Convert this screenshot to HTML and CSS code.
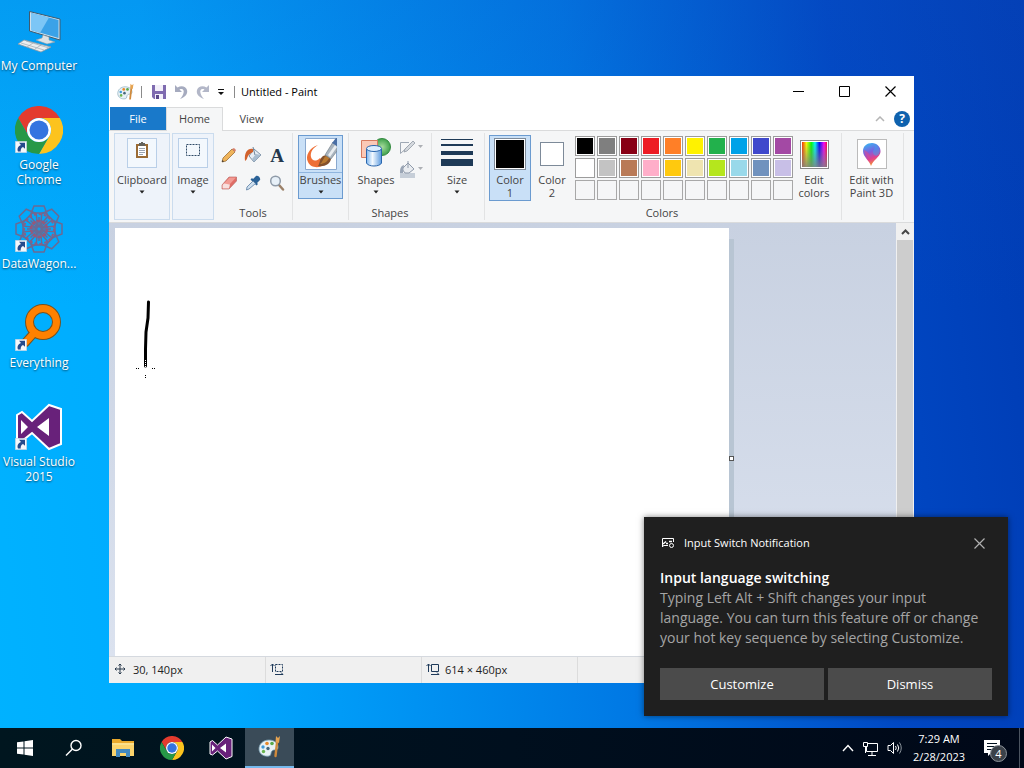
FILE: index.html
```html
<!DOCTYPE html>
<html lang="en">
<head>
  <meta charset="UTF-8">
  <title>Untitled - Paint</title>
  <link rel="stylesheet" href="styles.css">
</head>
<body>
  <!-- Shared icons -->
  <svg class="defs" width="0" height="0" aria-hidden="true">
    <symbol id="chrome" viewBox="0 0 48 48">
      <path fill="#e33b2e" d="M24 12H44.8A24 24 0 0 0 3.2 12L13.6 30A12 12 0 0 1 24 12Z"/>
      <path fill="#fcc31e" d="M44.8 12A24 24 0 0 1 24 48L34.4 30A12 12 0 0 0 24 12Z"/>
      <path fill="#279847" d="M24 48A24 24 0 0 1 3.2 12L13.6 30A12 12 0 0 0 34.4 30Z"/>
      <circle cx="24" cy="24" r="12" fill="#fff"/>
      <circle cx="24" cy="24" r="9.5" fill="#3474e0"/>
    </symbol>
    <symbol id="vs" viewBox="0 0 48 48">
      <path fill="#68217a" stroke="#fff" stroke-width="2" fill-rule="evenodd" d="M2 12L7 9L17 18L34 2L46 6V41L34 46L17 30L7 38L2 36Z"/>
      <path fill="#fff" d="M6 17L13 24L6 31ZM34 15V33L22 24Z"/>
    </symbol>
    <symbol id="shortcut" viewBox="0 0 12 12">
      <path fill="#f4f7fb" stroke="#b9cbdc" stroke-width=".6" d="M.3.3H11.7V11.7H.3Z"/>
      <path fill="#254a8c" d="M4 1.8H10V7.8L8 6C6 7 5.4 8.600 5.800 10.500H3C1.800 7.500 3.200 5 6 3.900Z"/>
    </symbol>
    <symbol id="palette" viewBox="0 0 24 24">
      <path fill="#e9f1f5" stroke="#7ba2b5" stroke-width=".8" d="M11 5C5 5 1 9 1 14C1 19 6 22 11 21C14 20.500 12 17 14.500 15.500C17 14 20 16 20 12C20 8 16 5 11 5Z"/>
      <circle cx="5" cy="12" r="1.700" fill="#3f9ad8"/>
      <circle cx="9" cy="8.500" r="1.800" fill="#e98a2a"/>
      <circle cx="14" cy="8.500" r="1.800" fill="#59a84b"/>
      <circle cx="5.500" cy="16.500" r="1.700" fill="#68b34e"/>
      <circle cx="10" cy="13.500" r="1.700" fill="#44677c"/>
      <path stroke="#d08a3c" stroke-width="2.400" stroke-linecap="round" d="M17.500 21L19 8"/>
      <path fill="#e6a451" d="M17.500 7L18 1L20 3L22 1L21 8Z"/>
    </symbol>
    <symbol id="down" viewBox="0 0 6 4">
      <path fill="currentColor" d="M.5.5H5.500L3 3.500Z"/>
    </symbol>
  </svg>

  <main class="desktop">
    <nav class="shortcuts">
      <a class="shortcut" href="#">
        <svg class="shortcut-icon" viewBox="0 0 48 48">
          <path fill="#cfe0ec" stroke="#3e5b70" d="M14.500 4.500L45 12V33L14.500 24Z"/>
          <path fill="#3aa2e8" d="M16 6L43.500 13V31L16 23Z"/>
          <path fill="#7cc6f6" d="M16 6L34 10.500L25 26L16 23Z"/>
          <path fill="#dfe3e6" stroke="#8f9aa2" stroke-width=".6" d="M28 28L34 30V33L40 35L32 37L21 33L27 31Z"/>
          <path fill="#eceef0" stroke="#8b98a3" stroke-width=".8" d="M9 33L36 40L26 45L3 37Z"/>
          <path stroke="#a0a9b0" stroke-width=".7" fill="none" d="M6 36L29 43M11 34L34 41M12 40L18 36M20 42L26 38"/>
        </svg>
        <span>My&nbsp;Computer</span>
      </a>
      <a class="shortcut" href="#">
        <svg class="shortcut-icon" viewBox="0 0 48 48">
          <use href="#chrome" width="48" height="48"/>
          <use href="#shortcut" y="35" width="12" height="12"/>
        </svg>
        <span>Google Chrome</span>
      </a>
      <a class="shortcut" href="#">
        <svg class="shortcut-icon" viewBox="0 0 48 48">
          <g fill="none" stroke="#6b6a94" stroke-width="1.500">
            <path id="petal" d="M24 22L15 11L19 1H29L33 11ZM17 8L31 8M24 22L24 12"/>
            <use href="#petal" transform="rotate(45 24 24)"/>
            <use href="#petal" transform="rotate(90 24 24)"/>
            <use href="#petal" transform="rotate(135 24 24)"/>
            <use href="#petal" transform="rotate(180 24 24)"/>
            <use href="#petal" transform="rotate(225 24 24)"/>
            <use href="#petal" transform="rotate(270 24 24)"/>
            <use href="#petal" transform="rotate(315 24 24)"/>
            <circle cx="24" cy="24" r="8" stroke="#96587a" stroke-width="2.500" stroke-dasharray="4 1"/>
            <circle cx="24" cy="24" r="15" stroke="#8a5f86" stroke-width="2" stroke-dasharray="3 2"/>
          </g>
          <use href="#shortcut" y="35" width="12" height="12"/>
        </svg>
        <span>DataWagon...</span>
      </a>
      <a class="shortcut" href="#">
        <svg class="shortcut-icon" viewBox="0 0 48 48">
          <path stroke="#77521f" stroke-width="9" stroke-linecap="round" d="M18 30L10 39"/>
          <circle cx="28" cy="18" r="13.500" fill="none" stroke="#77521f" stroke-width="9"/>
          <path stroke="#ff8100" stroke-width="7" stroke-linecap="round" d="M19 29L10 39"/>
          <circle cx="28" cy="18" r="13.500" fill="none" stroke="#ff8100" stroke-width="7"/>
          <use href="#shortcut" y="35" width="12" height="12"/>
        </svg>
        <span>Everything</span>
      </a>
      <a class="shortcut" href="#">
        <svg class="shortcut-icon" viewBox="0 0 48 48">
          <use href="#vs" width="48" height="48"/>
          <use href="#shortcut" y="35" width="12" height="12"/>
        </svg>
        <span>Visual Studio 2015</span>
      </a>
    </nav>

    <section class="window">
      <header class="titlebar">
        <svg width="18" height="18"><use href="#palette"/></svg>
        <i class="divider"></i>
        <button class="quick" aria-label="Save">
          <svg width="16" height="16" viewBox="0 0 16 16">
            <path fill="#7f6bb0" d="M1 1H15V15H3L1 13Z"/>
            <path fill="#f3f0fa" d="M4 1H12V7H4ZM4 10H12V15H4Z"/>
            <path fill="#5c4a8c" d="M5 11H8V15H5Z"/>
          </svg>
        </button>
        <button class="quick" aria-label="Undo">
          <svg width="16" height="16" viewBox="0 0 16 16">
            <path fill="#a6abbf" d="M2 1V8H9L6.500 5.500C9.500 4 11.500 6 10.500 9C10 11 9 13 7 15C12.500 13 15 10 14 6C13 2 8 1 4.500 3.500Z"/>
          </svg>
        </button>
        <button class="quick" aria-label="Redo">
          <svg width="16" height="16" viewBox="0 0 16 16">
            <path fill="#b3b7c8" d="M14 1V8H7L9.500 5.500C6.500 4 4.500 6 5.500 9C6 11 7 13 9 15C3.500 13 1 10 2 6C3 2 8 1 11.500 3.500Z"/>
          </svg>
        </button>
        <button class="quick customize" aria-label="Customize toolbar">
          <svg width="8" height="8" viewBox="0 0 8 8"><path fill="#111" d="M1 1H7V2H1ZM1 4H7L4 7Z"/></svg>
        </button>
        <i class="divider"></i>
        <h1>Untitled - Paint</h1>
        <div class="window-buttons">
          <button aria-label="Minimize"><svg width="11" height="11" viewBox="0 0 11 11"><path stroke="#000" d="M0 5.500H11"/></svg></button>
          <button aria-label="Maximize"><svg width="11" height="11" viewBox="0 0 11 11"><path fill="none" stroke="#000" d="M.5.5H10.500V10.500H.5Z"/></svg></button>
          <button aria-label="Close"><svg width="11" height="11" viewBox="0 0 11 11"><path stroke="#000" stroke-width="1.200" d="M.5.5L10.500 10.500M10.500.5L.5 10.500"/></svg></button>
        </div>
      </header>

      <div class="tabs">
        <button class="tab file">File</button>
        <button class="tab active">Home</button>
        <button class="tab">View</button>
        <div class="tab-tools">
          <button aria-label="Collapse ribbon"><svg width="10" height="6" viewBox="0 0 10 6"><path fill="none" stroke="#b5b5b5" stroke-width="1.500" d="M1 5L5 1L9 5"/></svg></button>
          <button class="help" aria-label="Help">?</button>
        </div>
      </div>

      <div class="ribbon">
        <div class="group collapsed clipboard">
          <button class="big">
            <span class="frame"><svg width="16" height="22" viewBox="0 0 16 22">
              <path fill="#9a6b34" d="M2 2H14V16H2Z"/>
              <path fill="#fff" d="M4 4H12V14H4Z"/>
              <path fill="#62625c" d="M5 1H7V0H9V1H11V4H5Z"/>
              <path stroke="#9aa4b0" d="M5 6.500H11M5 8.500H11M5 10.500H11M5 12.500H9"/>
            </svg></span>
            <span>Clipboard</span>
            <svg class="arrow"><use href="#down"/></svg>
          </button>
        </div>
        <div class="group collapsed image">
          <button class="big">
            <span class="frame"><svg width="16" height="22" viewBox="0 0 16 22"><path fill="none" stroke="#2e4a66" stroke-dasharray="2 1" d="M1.500 2.500H14.500V13.500H1.500Z"/></svg></span>
            <span>Image</span>
            <svg class="arrow"><use href="#down"/></svg>
          </button>
        </div>
        <div class="group tools">
          <div class="tool-grid">
            <button aria-label="Pencil"><svg width="16" height="16" viewBox="0 0 16 16">
              <path fill="#efb45b" stroke="#8f6127" stroke-width=".7" d="M2 11L11 2L14 5L5 14L1 15Z"/>
              <path fill="#d77f6b" d="M11 2L13 1L15 3L14 5Z"/><path fill="#333" d="M1.500 13L3 14.500L1 15Z"/>
            </svg></button>
            <button aria-label="Fill"><svg width="18" height="16" viewBox="0 0 18 16">
              <path fill="#e6edf4" stroke="#6f8499" stroke-width=".9" d="M10 2L17 8L10 15L5 9Z"/>
              <path fill="#a8bccf" d="M12 7L17 8L10 15L8 12Z"/>
              <path fill="#d2622d" d="M9 2C4 1 0 5 1 14C3 13 3 11 4 9C5 7 7 6 9 5Z"/>
              <path fill="none" stroke="#6f8499" d="M9 0L11 8"/>
            </svg></button>
            <button class="text-tool" aria-label="Text">A</button>
            <button aria-label="Eraser"><svg width="16" height="16" viewBox="0 0 16 16">
              <path fill="#e06d66" stroke="#b25c58" stroke-width=".6" d="M1 10L8 2H15.500V6L8 14H1Z"/>
              <path fill="#f29b94" d="M2 9.500L8.500 2.500H15L8.500 9.500Z"/>
              <path fill="#f7e0de" d="M1.500 10L3 8.500L9 9.500L8 13.500H1.500Z"/>
            </svg></button>
            <button aria-label="Color picker"><svg width="16" height="16" viewBox="0 0 16 16">
              <path fill="#2b6297" d="M8 4L11 1C13 0 16 3 15 5L12 8L13 9L11.500 10.500L5.500 4.500L7 3Z"/>
              <path fill="#cfe0ef" stroke="#5a7ea3" stroke-width=".8" d="M8 6L10.500 8.500L4 14L1.500 15L2 12Z"/>
            </svg></button>
            <button aria-label="Magnifier"><svg width="16" height="16" viewBox="0 0 16 16">
              <path stroke="#9b8068" stroke-width="2.500" stroke-linecap="round" d="M10 10L14 14.500"/>
              <circle cx="6.500" cy="6" r="4.800" fill="#e7f0f8" stroke="#8e9aa8" stroke-width="1.500"/>
            </svg></button>
          </div>
          <span class="group-name">Tools</span>
        </div>
        <div class="group brushes">
          <button class="big split">
            <svg class="art" viewBox="0 0 32 32">
              <path fill="#fff" stroke="#8aa9cf" d="M.5.5H31.500V31.500H.5Z"/>
              <path fill="#ee6f35" d="M13 7C4 10 0 18 3 24C6 31 16 30 20 26L15 20C11 24 7 23 6 19C5 14 8 10 13 7Z"/>
              <path fill="#84512c" d="M13 28C15 26 14 21 18 18L24 16L26 21C25 26 20 29 13 28Z"/>
              <path fill="#b9792f" d="M15 26C18 24 18 20 21 18L25 19C22 24 19 26 15 26Z"/>
              <path fill="#a9b4be" stroke="#6a7680" stroke-width=".6" d="M20 17L28 4L32 8V13L26 21Z"/>
              <path fill="#e9edf0" d="M23 17L30 7L32 9L25 19Z"/>
              <path fill="#4a6fa5" d="M27 5L31 0H32V8Z"/>
            </svg>
            <span>Brushes</span>
            <svg class="arrow"><use href="#down"/></svg>
          </button>
        </div>
        <div class="group shapes">
          <div class="row">
            <button class="big">
              <svg class="art" viewBox="0 0 32 32">
                <defs>
                  <linearGradient id="cyl"><stop offset="0" stop-color="#7fb6ee"/><stop offset=".4" stop-color="#f4faff"/><stop offset="1" stop-color="#5d9bdf"/></linearGradient>
                  <radialGradient id="ball"><stop offset="0" stop-color="#a8dd9d"/><stop offset="1" stop-color="#3fa04b"/></radialGradient>
                </defs>
                <circle cx="22" cy="9" r="8.500" fill="url(#ball)" stroke="#348a40"/>
                <path fill="#fbc9b6" stroke="#d77b5f" d="M1.500 2.500H17.500V19.500H1.500Z"/>
                <path fill="url(#cyl)" stroke="#2a66ad" d="M6.500 11V25C8 29 20 29 21.500 25V11Z"/>
                <ellipse cx="14" cy="10.500" rx="7.500" ry="3" fill="#dceefe" stroke="#2a66ad"/>
              </svg>
              <span>Shapes</span>
              <svg class="arrow"><use href="#down"/></svg>
            </button>
            <div class="shape-options">
              <button disabled aria-label="Outline"><svg width="24" height="16" viewBox="0 0 24 16">
                <path fill="none" stroke="#9fa8b4" d="M10 2.500H1.500V13.500L14 2"/>
                <path fill="#d5d9de" stroke="#9099a5" stroke-width=".8" d="M5 12L6 9L14 1L16 3L8 11Z"/>
                <path fill="#adb0b5" d="M19 5H24L21.500 8Z"/>
              </svg></button>
              <button disabled aria-label="Fill"><svg width="24" height="17" viewBox="0 0 24 17">
                <path fill="#c6ced8" d="M1 12H16V17H1Z"/>
                <path fill="#e9ecf0" stroke="#8f9aaa" d="M3 8L9 2L15 8L10 12H6Z"/>
                <path fill="#9aa5b5" d="M5 4C1 5 1 9 1 12L4 12Z"/><path stroke="#8f9aaa" d="M9 0V7"/>
                <path fill="#adb0b5" d="M19 6H24L21.500 9Z"/>
              </svg></button>
            </div>
          </div>
          <span class="group-name">Shapes</span>
        </div>
        <div class="group size">
          <button class="big">
            <svg class="art" viewBox="0 0 32 32"><path fill="#1e3a57" d="M0 1H32V2H0ZM0 6H32V8H0ZM0 13H32V17H0ZM0 21H32V28H0Z"/></svg>
            <span>Size</span>
            <svg class="arrow"><use href="#down"/></svg>
          </button>
        </div>
        <div class="group colors">
          <div class="row">
            <button class="big color selected"><span class="swatch-box"><i class="swatch black"></i></span><span>Color<br>1</span></button>
            <button class="big color"><span class="swatch-box"><i class="swatch small"></i></span><span>Color<br>2</span></button>
            <div class="palette">
              <button class="c-black" aria-label="Black"></button>
              <button class="c-gray" aria-label="Gray"></button>
              <button class="c-darkred" aria-label="Dark red"></button>
              <button class="c-red" aria-label="Red"></button>
              <button class="c-orange" aria-label="Orange"></button>
              <button class="c-yellow" aria-label="Yellow"></button>
              <button class="c-green" aria-label="Green"></button>
              <button class="c-turquoise" aria-label="Turquoise"></button>
              <button class="c-indigo" aria-label="Indigo"></button>
              <button class="c-purple" aria-label="Purple"></button>
              <button class="c-white" aria-label="White"></button>
              <button class="c-lightgray" aria-label="Light gray"></button>
              <button class="c-brown" aria-label="Brown"></button>
              <button class="c-rose" aria-label="Rose"></button>
              <button class="c-gold" aria-label="Gold"></button>
              <button class="c-cream" aria-label="Light yellow"></button>
              <button class="c-lime" aria-label="Lime"></button>
              <button class="c-sky" aria-label="Light turquoise"></button>
              <button class="c-bluegray" aria-label="Blue-gray"></button>
              <button class="c-lavender" aria-label="Lavender"></button>
              <button class="empty" aria-label="Custom 1"></button>
              <button class="empty" aria-label="Custom 2"></button>
              <button class="empty" aria-label="Custom 3"></button>
              <button class="empty" aria-label="Custom 4"></button>
              <button class="empty" aria-label="Custom 5"></button>
              <button class="empty" aria-label="Custom 6"></button>
              <button class="empty" aria-label="Custom 7"></button>
              <button class="empty" aria-label="Custom 8"></button>
              <button class="empty" aria-label="Custom 9"></button>
              <button class="empty" aria-label="Custom 10"></button>
            </div>
            <button class="big color"><span class="swatch-box"><i class="spectrum"></i></span><span>Edit<br>colors</span></button>
          </div>
          <span class="group-name">Colors</span>
        </div>
        <div class="group paint3d">
          <button class="big">
            <span class="swatch-box"><span class="frame plain"><svg width="20" height="26" viewBox="0 0 20 26">
              <defs><linearGradient id="drop" x1=".2" y1="0" x2=".5" y2="1">
                <stop offset="0" stop-color="#35b8f2"/><stop offset=".4" stop-color="#7c5fe0"/>
                <stop offset=".7" stop-color="#e2408f"/><stop offset="1" stop-color="#f59a28"/>
              </linearGradient></defs>
              <path fill="url(#drop)" d="M10 2C15 2 19 6 18.500 11C18 16 11 19 9 25C8 20 1 16 1 10C1 5 5 2 10 2Z"/>
              <path fill="#39a5ee" opacity=".5" d="M12 3C17 5 19 9 17 13C15 16 11 15 11 11C11 8 14 7 12 3Z"/>
              <path fill="#e8458a" opacity=".5" d="M2 9C5 10 9 13 8 19C5 16 2 13 2 9Z"/>
            </svg></span></span>
            <span>Edit with<br>Paint 3D</span>
          </button>
        </div>
      </div>

      <div class="workspace">
        <div class="scroll-area">
          <div class="canvas">
            <svg width="614" height="460" viewBox="0 0 614 460">
              <path fill="none" stroke="#000" stroke-width="3" stroke-linecap="round" stroke-linejoin="round" d="M33.500 74L33 90L31 104L30.500 121V138"/>
              <path stroke="#000" stroke-dasharray="1 1" d="M21 140.500H24M37 140.500H41M30.500 147V150"/>
              <path stroke="#fff" stroke-dasharray="1 1" d="M30.500 132V139"/>
            </svg>
            <i class="handle"></i>
          </div>
        </div>
        <div class="scrollbar">
          <button aria-label="Scroll up"><svg width="9" height="6" viewBox="0 0 9 6"><path fill="none" stroke="#454545" stroke-width="2" d="M1 5L4.500 1.500L8 5"/></svg></button>
          <div class="thumb"></div>
        </div>
      </div>

      <footer class="status">
        <div class="status-cell">
          <svg width="14" height="12" viewBox="0 0 14 12"><path fill="none" stroke="#2a3b4d" d="M1 6H11M6 1V11M4.500 2.500L6 1L7.500 2.500M4.500 9.500L6 11L7.500 9.500M2.500 4.500L1 6L2.500 7.500M9.500 4.500L11 6L9.500 7.500"/></svg>
          <span>30, 140px</span>
        </div>
        <div class="status-cell">
          <svg width="14" height="12" viewBox="0 0 14 12"><path fill="none" stroke="#1f3a5a" d="M2.500 1V9M.5 3L2.500 1L4.500 3M5 11.500H13M11 9.500L13 11.500"/><path fill="none" stroke="#1f3a5a" stroke-dasharray="2 1" d="M5.500 1.500H12.500V8.500H5.500Z"/></svg>
        </div>
        <div class="status-cell">
          <svg width="14" height="12" viewBox="0 0 14 12"><path fill="none" stroke="#1f3a5a" d="M2.500 1V9M.5 3L2.500 1L4.500 3M5 11.500H13M11 9.500L13 11.500M5.500 1.500H12.500V8.500H5.500Z"/></svg>
          <span>614 × 460px</span>
        </div>
      </footer>
    </section>

    <aside class="toast">
      <div class="toast-head">
        <svg width="16" height="12" viewBox="0 0 16 12">
          <path fill="none" stroke="#fff" d="M8 8.500H3.500L2.500 10V1.500H13.500V5"/>
          <path stroke="#fff" stroke-width="1.500" d="M3 7L6 4.500M6 6.500H8M9 4.500H12"/>
          <circle cx="11.500" cy="8.500" r="2" fill="none" stroke="#fff"/>
        </svg>
        <span>Input Switch Notification</span>
        <button class="toast-close" aria-label="Close"><svg width="11" height="11" viewBox="0 0 11 11"><path stroke="#b0b0b0" stroke-width="1.200" d="M.5.5L10.500 10.500M10.500.5L.5 10.500"/></svg></button>
      </div>
      <h2>Input language switching</h2>
      <p>Typing Left Alt + Shift changes your input language. You can turn this feature off or change your hot key sequence by selecting Customize.</p>
      <div class="toast-actions">
        <button>Customize</button>
        <button>Dismiss</button>
      </div>
    </aside>
  </main>

  <footer class="taskbar">
    <button class="task" aria-label="Start"><svg width="16" height="16" viewBox="0 0 16 16"><path fill="#fff" d="M0 2.300L6.500 1.400V7.500H0ZM7.500 1.200L16 0V7.500H7.500ZM0 8.500H6.500V14.600L0 13.700ZM7.500 8.500H16V16L7.500 14.800Z"/></svg></button>
    <button class="task" aria-label="Search"><svg width="18" height="18" viewBox="0 0 18 18"><circle cx="11" cy="6.500" r="5" fill="none" stroke="#fff" stroke-width="1.400"/><path stroke="#fff" stroke-width="1.400" d="M7.500 10L1 16.500"/></svg></button>
    <button class="task" aria-label="File Explorer"><svg width="22" height="20" viewBox="0 0 22 20">
      <path fill="#e9a92c" d="M0 1H8L10 3H22V18H0Z"/><path fill="#fbd46c" d="M0 6H22V18H0Z"/>
      <path fill="#fbe08b" d="M0 5H22V7H0Z"/><path fill="#4389bf" d="M4 11H18V19H14V15H8V19H4Z"/>
    </svg></button>
    <button class="task" aria-label="Google Chrome"><svg width="24" height="24"><use href="#chrome"/></svg></button>
    <button class="task" aria-label="Visual Studio"><svg width="24" height="24"><use href="#vs"/></svg></button>
    <button class="task active" aria-label="Paint"><svg width="24" height="24"><use href="#palette"/></svg></button>
    <div class="tray">
      <button aria-label="Show hidden icons"><svg width="12" height="8" viewBox="0 0 12 8"><path fill="none" stroke="#fff" stroke-width="1.400" d="M1 7L6 1.500L11 7"/></svg></button>
      <button aria-label="Network"><svg width="17" height="15" viewBox="0 0 17 15"><path fill="none" stroke="#fff" d="M6 2.500H15.500V10.500H4.500V6M10 10.500V14M6 14.500H14M1.500 1.500H5.500V5.500H1.500ZM3.500 5.500V12"/></svg></button>
      <button aria-label="Volume"><svg width="16" height="14" viewBox="0 0 16 14"><path fill="none" stroke="#fff" d="M1 4.500H3.500L6.500 1.500V12.500L3.500 9.500H1ZM8.500 5Q10 7 8.500 9M10.500 3.500Q13 7 10.500 10.500"/><path fill="none" stroke="#8b949c" d="M12.500 1.500Q16 7 12.500 12.500"/></svg></button>
      <button class="clock">7:29 AM<br>2/28/2023</button>
      <button class="notifications" aria-label="Notifications">
        <svg width="18" height="18" viewBox="0 0 18 18"><path fill="#fff" d="M1 1H17V14H8L5 17V14H1Z"/><path stroke="#00101e" d="M4 4.500H14M4 7.500H14M4 10.500H10"/></svg>
        <span class="count">4</span>
      </button>
    </div>
  </footer>
</body>
</html>
```

FILE: styles.css
```css
* {
  box-sizing: border-box;
}

body {
  margin: 0;
  min-height: 100vh;
  display: flex;
  flex-direction: column;
  overflow: hidden;
  font-family: "Open Sans", "Noto Sans", sans-serif;
  font-size: 11px;
  line-height: 13px;
  color: #444;
  background:
    linear-gradient(180deg, rgba(20, 80, 190, 0.2), rgba(0, 0, 0, 0) 40%),
    linear-gradient(84deg, #00b2ff 0%, #00aaff 20%, #0078e4 58%, #0048c4 82%, #003cb4 100%);
}

button {
  padding: 0;
  border: none;
  background: none;
  font: inherit;
  color: inherit;
}

svg {
  display: block;
}

.defs {
  position: absolute;
}

.desktop {
  position: relative;
  flex: 1;
}

/* Desktop shortcuts */
.shortcuts {
  width: 78px;
  padding-top: 7px;
}

.shortcut {
  display: flex;
  flex-direction: column;
  align-items: center;
  gap: 3px;
  height: 99px;
  color: #fff;
  font-size: 12px;
  line-height: 15px;
  text-align: center;
  text-decoration: none;
  text-shadow: 0 1px 2px rgba(0, 0, 0, 0.6);
}

.shortcut-icon {
  width: 48px;
  height: 48px;
  flex: none;
}

/* Paint window */
.window {
  position: absolute;
  top: 76px;
  right: 110px;
  bottom: 45px;
  left: 109px;
  display: flex;
  flex-direction: column;
  background: #fff;
}

.titlebar {
  display: flex;
  align-items: center;
  height: 31px;
  padding: 0 1px 0 8px;
}

.titlebar h1 {
  margin: 0;
  font-size: 11px;
  font-weight: normal;
  color: #000;
}

.divider {
  width: 1px;
  height: 12px;
  margin: 0 6px;
  background: #8a8a8a;
}

.quick {
  width: 22px;
  display: flex;
  justify-content: center;
}

.quick.customize {
  width: 14px;
}

.window-buttons {
  display: flex;
  margin-left: auto;
}

.window-buttons button {
  width: 46px;
  height: 30px;
  display: grid;
  place-items: center;
}

.tabs {
  display: flex;
  height: 24px;
  border-bottom: 1px solid #dadbdc;
  padding-left: 1px;
}

.tab {
  width: 57px;
  height: 23px;
}

.tab.file {
  width: 56px;
  background: #1979ca;
  color: #fff;
}

.tab.active {
  height: 24px;
  padding-bottom: 2px;
  background: #f5f6f7;
  border: 1px solid #dadbdc;
  border-bottom: none;
}

.tab-tools {
  display: flex;
  align-items: center;
  gap: 9px;
  margin-left: auto;
  padding-right: 4px;
}

.help {
  width: 16px;
  height: 16px;
  border-radius: 50%;
  background: #0f62ae;
  color: #fff;
  font-size: 12px;
  font-weight: bold;
}

/* Ribbon */
.ribbon {
  display: flex;
  height: 91px;
  padding: 2px 9px 2px 5px;
  background: #f5f6f7;
}

.group {
  display: flex;
  flex-direction: column;
  align-items: center;
  padding: 2px 0 1px;
  border-right: 1px solid #e2e3e4;
  flex: none;
}

.group.collapsed {
  padding-top: 1px;
  background: #eef3fa;
  border: 1px solid #cbdcee;
}

.clipboard {
  width: 56px;
  margin-right: 2px;
}

.image {
  width: 42px;
}

.tools {
  width: 79px;
}

.brushes {
  width: 56px;
}

.shapes {
  width: 83px;
}

.size {
  width: 53px;
}

.colors {
  width: 357px;
}

.paint3d {
  width: 62px;
}

.size,
.colors,
.paint3d {
  padding-right: 2px;
}

.group-name {
  margin-top: auto;
}

.row {
  display: flex;
}

.big {
  display: flex;
  flex-direction: column;
  align-items: center;
  padding-top: 3px;
}

.big > span:not(.frame):not(.swatch-box) {
  margin-top: 3px;
}

.arrow {
  width: 6px;
  height: 4px;
  margin-top: 4px;
  color: #222;
}

.art {
  width: 32px;
  height: 32px;
}

.frame {
  width: 30px;
  height: 30px;
  margin-bottom: 2px;
  display: grid;
  place-items: center;
  background: #f3f8fd;
  border: 1px solid #b9cfe8;
}

.frame.plain {
  margin: 0;
  background: #fff;
  border-color: #bbb;
}

.tool-grid {
  display: grid;
  grid-template-columns: repeat(3, 24px);
  grid-template-rows: 28px 28px;
  margin-top: 6px;
  place-items: center;
}

.text-tool {
  font-family: "Liberation Serif", serif;
  font-size: 19px;
  font-weight: bold;
  color: #24384d;
}

.big.split {
  width: 45px;
  height: 64px;
  padding-top: 2px;
  border: 1px solid #6b9bd0;
  background: linear-gradient(#c9e0f7 36px, #8fb5de 36px, #8fb5de 37px, #c9e0f7 37px);
}

.shape-options {
  display: flex;
  flex-direction: column;
  gap: 5px;
  padding: 5px 0 0 4px;
}

.color {
  width: 42px;
  height: 66px;
  border: 1px solid transparent;
  padding-top: 2px;
}

.color.selected {
  background: #c9e0f7;
  border-color: #6b9bd0;
}

.swatch-box {
  width: 32px;
  height: 32px;
  display: grid;
  place-items: center;
}

.swatch {
  width: 32px;
  height: 32px;
  border: 1px solid #7d8a99;
  background: #fff;
}

.swatch.black {
  background: #000;
  box-shadow: inset 0 0 0 1px #fff;
}

.swatch.small {
  width: 24px;
  height: 24px;
}

.spectrum {
  width: 29px;
  height: 29px;
  border: 1px solid #888;
  box-shadow: inset 0 0 0 1px #fff;
  background:
    linear-gradient(rgba(128, 128, 128, 0), rgba(128, 128, 128, 0.9)),
    linear-gradient(90deg, #f00, #ff0 20%, #0f0 38%, #0ff 52%, #00f 68%, #f0f 85%, #f00);
}

.palette {
  display: grid;
  grid-template-columns: repeat(10, 20px);
  grid-auto-rows: 20px;
  gap: 2px;
  margin: 1px 0 0 2px;
}

.palette button {
  border: 1px solid #9c9c9c;
  box-shadow: inset 0 0 0 1px #fff;
}

.palette .empty {
  border-color: #a8a8a8;
  box-shadow: none;
}

.c-black { background: #000; }
.c-gray { background: #7f7f7f; }
.c-darkred { background: #880015; }
.c-red { background: #ed1c24; }
.c-orange { background: #ff7f27; }
.c-yellow { background: #fff200; }
.c-green { background: #22b14c; }
.c-turquoise { background: #00a2e8; }
.c-indigo { background: #3f48cc; }
.c-purple { background: #a349a4; }
.c-white { background: #fff; }
.c-lightgray { background: #c3c3c3; }
.c-brown { background: #b97a57; }
.c-rose { background: #ffaec9; }
.c-gold { background: #ffc90e; }
.c-cream { background: #efe4b0; }
.c-lime { background: #b5e61d; }
.c-sky { background: #99d9ea; }
.c-bluegray { background: #7092be; }
.c-lavender { background: #c8bfe7; }

/* Drawing area */
.workspace {
  flex: 1;
  min-height: 0;
  display: flex;
  border-top: 1px solid #dadbdc;
  background: linear-gradient(#c8d1e1, #dbe2ef);
}

.scroll-area {
  flex: 1;
  min-width: 0;
  padding: 5px 0 0 6px;
  overflow: hidden;
}

.canvas {
  position: relative;
  width: 614px;
  height: 460px;
  background: #fff;
  box-shadow: 6px 10px 0 -1px #b8c5d3;
}

.handle {
  position: absolute;
  top: 228px;
  left: 614px;
  width: 5px;
  height: 5px;
  background: #fff;
  border: 1px solid #555;
}

.scrollbar {
  width: 18px;
  display: flex;
  flex-direction: column;
  padding: 0 1px;
  background: #f0f0f0;
}

.scrollbar button {
  height: 17px;
  display: grid;
  place-items: center;
}

.thumb {
  flex: 1;
  background: #cdcdcd;
}

.status {
  display: flex;
  height: 27px;
  padding-left: 1px;
  border-top: 1px solid #d5d9df;
  background: #f0f0f0;
  color: #222;
}

.status-cell {
  width: 156px;
  display: flex;
  align-items: center;
  gap: 5px;
  padding: 0 0 2px 4px;
  border-right: 1px solid #dcdcdc;
}

/* Notification */
.toast {
  position: absolute;
  right: 16px;
  bottom: 12px;
  width: 364px;
  padding: 16px;
  background: #1f1f1f;
  color: #a5a5a5;
  font-size: 14px;
  line-height: 20px;
  box-shadow: 0 0 6px rgba(0, 0, 0, 0.5);
}

.toast-head {
  display: flex;
  align-items: center;
  gap: 8px;
  height: 20px;
  margin-bottom: 15px;
  color: #fff;
  font-size: 11px;
}

.toast-close {
  margin-left: auto;
  padding: 6px 7px;
}

.toast h2 {
  margin: 0;
  font-size: 14px;
  font-weight: 600;
  color: #fff;
}

.toast p {
  margin: 0 0 20px;
}

.toast-actions {
  display: grid;
  grid-template-columns: 1fr 1fr;
  gap: 4px;
}

.toast-actions button {
  height: 32px;
  background: #4b4b4b;
  color: #fff;
  font-size: 13px;
}

/* Taskbar */
.taskbar {
  display: flex;
  height: 40px;
  background: linear-gradient(90deg, #00161f, #000f1e 50%, #000818);
  color: #fff;
}

.task {
  width: 49px;
  display: grid;
  place-items: center;
}

.task.active {
  background: #3a4b58;
  border-bottom: 2px solid #76b9ed;
}

.tray {
  display: flex;
  align-items: center;
  gap: 8px;
  margin-left: auto;
  margin-right: 4px;
  padding-right: 18px;
  border-right: 1px solid #4b5460;
}

.clock {
  width: 56px;
  line-height: 18px;
  text-align: center;
}

.notifications {
  position: relative;
  margin-left: 8px;
}

.count {
  position: absolute;
  top: 6px;
  left: 7px;
  width: 17px;
  height: 17px;
  border: 1px solid #8d949b;
  border-radius: 50%;
  background: #3b424a;
  line-height: 15px;
}
```
